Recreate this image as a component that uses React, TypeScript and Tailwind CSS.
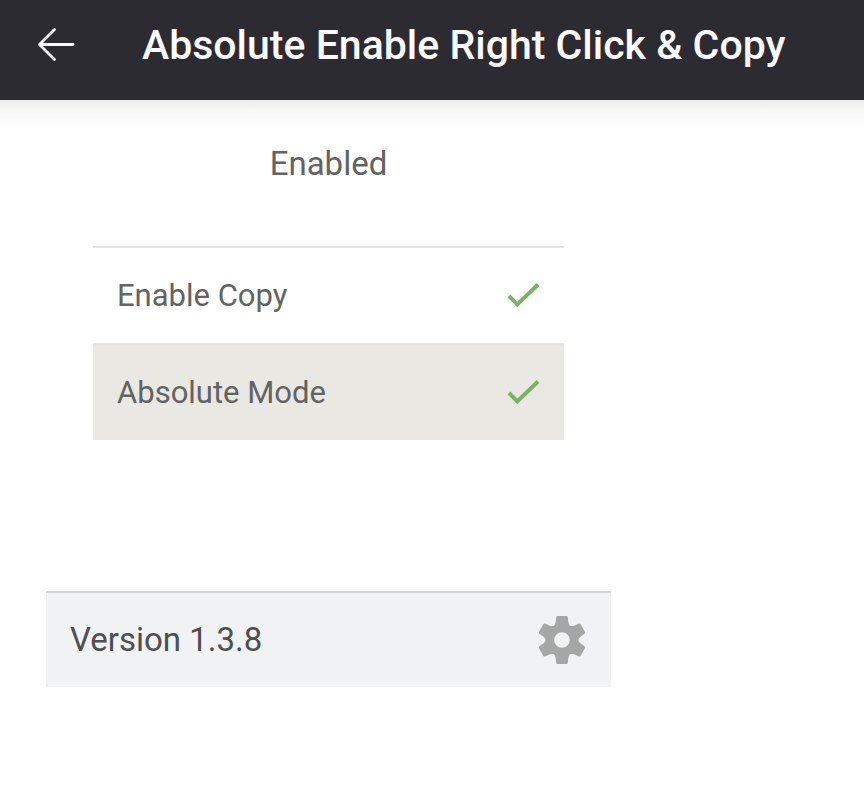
import { useState } from "react"

const modes = [
  { id: "enable-copy", name: "Enable Copy" },
  { id: "absolute-mode", name: "Absolute Mode" },
]

function BackIcon() {
  return (
    <svg className="w-10 h-10" viewBox="0 0 40 40" fill="none" stroke="currentColor" strokeWidth="2.8" strokeLinecap="round" strokeLinejoin="round" aria-hidden="true">
      <path d="M18.5 4.5 3.5 19.5l15 15M3.5 19.5h33.5" />
    </svg>
  )
}

function CheckIcon() {
  return (
    <svg className="col-start-1 row-start-1 w-8 h-8 pointer-events-none" viewBox="0 0 32 32" fill="none" stroke="currentColor" strokeWidth="4" aria-hidden="true">
      <path d="M1 16 9.3 24.5 30 4.5" />
    </svg>
  )
}

function GearIcon() {
  return (
    <svg className="w-12 h-12" viewBox="-23 -24 48 48" fill="currentColor" aria-hidden="true">
      <circle r="12" fill="none" stroke="currentColor" strokeWidth="8.4" />
      {[0, 60, 120, 180, 240, 300].map((angle) => (
        <path
          key={angle}
          transform={`rotate(${angle})`}
          d="M-8.4-13.8Q-6.8-15.4-6.4-17.6L-5.7-23Q-5.5-24-4.5-24H4.5Q5.5-24 5.7-23L6.4-17.6Q6.8-15.4 8.4-13.8L4-10H-4Z"
        />
      ))}
    </svg>
  )
}

export default function App() {
  const [enabled, setEnabled] = useState(true)
  const [active, setActive] = useState<string[]>(["enable-copy", "absolute-mode"])

  const toggle = (id: string) =>
    setActive((current) => (current.includes(id) ? current.filter((item) => item !== id) : [...current, id]))

  return (
    <div className="min-h-screen bg-white font-[Roboto,sans-serif] text-[#636363]">
      <header className="flex items-center gap-[66px] h-25 px-9 pb-[10px] bg-[#2c2b31] text-[#fbfaff]">
        <button type="button" aria-label="Back" className="shrink-0">
          <BackIcon />
        </button>
        <h1 className="text-[41px] leading-12 font-medium whitespace-nowrap">Absolute Enable Right Click & Copy</h1>
      </header>
      <div className="h-7 bg-linear-to-b from-[#ebebe9] via-[#fafafa] to-white" />

      <main className="max-w-[657px] px-[46px]">
        <button
          type="button"
          aria-pressed={enabled}
          onClick={() => setEnabled(!enabled)}
          className="block w-full h-18 text-[33px] leading-10 text-center"
        >
          {enabled ? "Enabled" : "Disabled"}
        </button>

        <ul className="mt-[46px] mx-[47px] border-t-2 border-[#e3e3e3]">
          {modes.map((mode) => (
            <li key={mode.id} className="last:bg-[#e9e8e2] last:border-t-2 last:border-[#e4e4e0]">
              <label htmlFor={mode.id} className="flex items-center justify-between h-[95px] px-6 pt-px text-[31px] leading-9">
                {mode.name}
                <span className="grid text-[#7fb069]">
                  <input
                    id={mode.id}
                    type="checkbox"
                    checked={active.includes(mode.id)}
                    onChange={() => toggle(mode.id)}
                    className="col-start-1 row-start-1 w-8 h-8 appearance-none"
                  />
                  {active.includes(mode.id) && <CheckIcon />}
                </span>
              </label>
            </li>
          ))}
        </ul>

        <footer className="flex items-center justify-between mt-[151px] h-24 px-6 border-t-2 border-[#d3d5d7] bg-[#f0f2f4]">
          <span className="text-[33px] leading-10 text-[#4f4f4f]">Version 1.3.8</span>
          <button type="button" aria-label="Settings" className="text-[#a5a7a6]">
            <GearIcon />
          </button>
        </footer>
      </main>
    </div>
  )
}
